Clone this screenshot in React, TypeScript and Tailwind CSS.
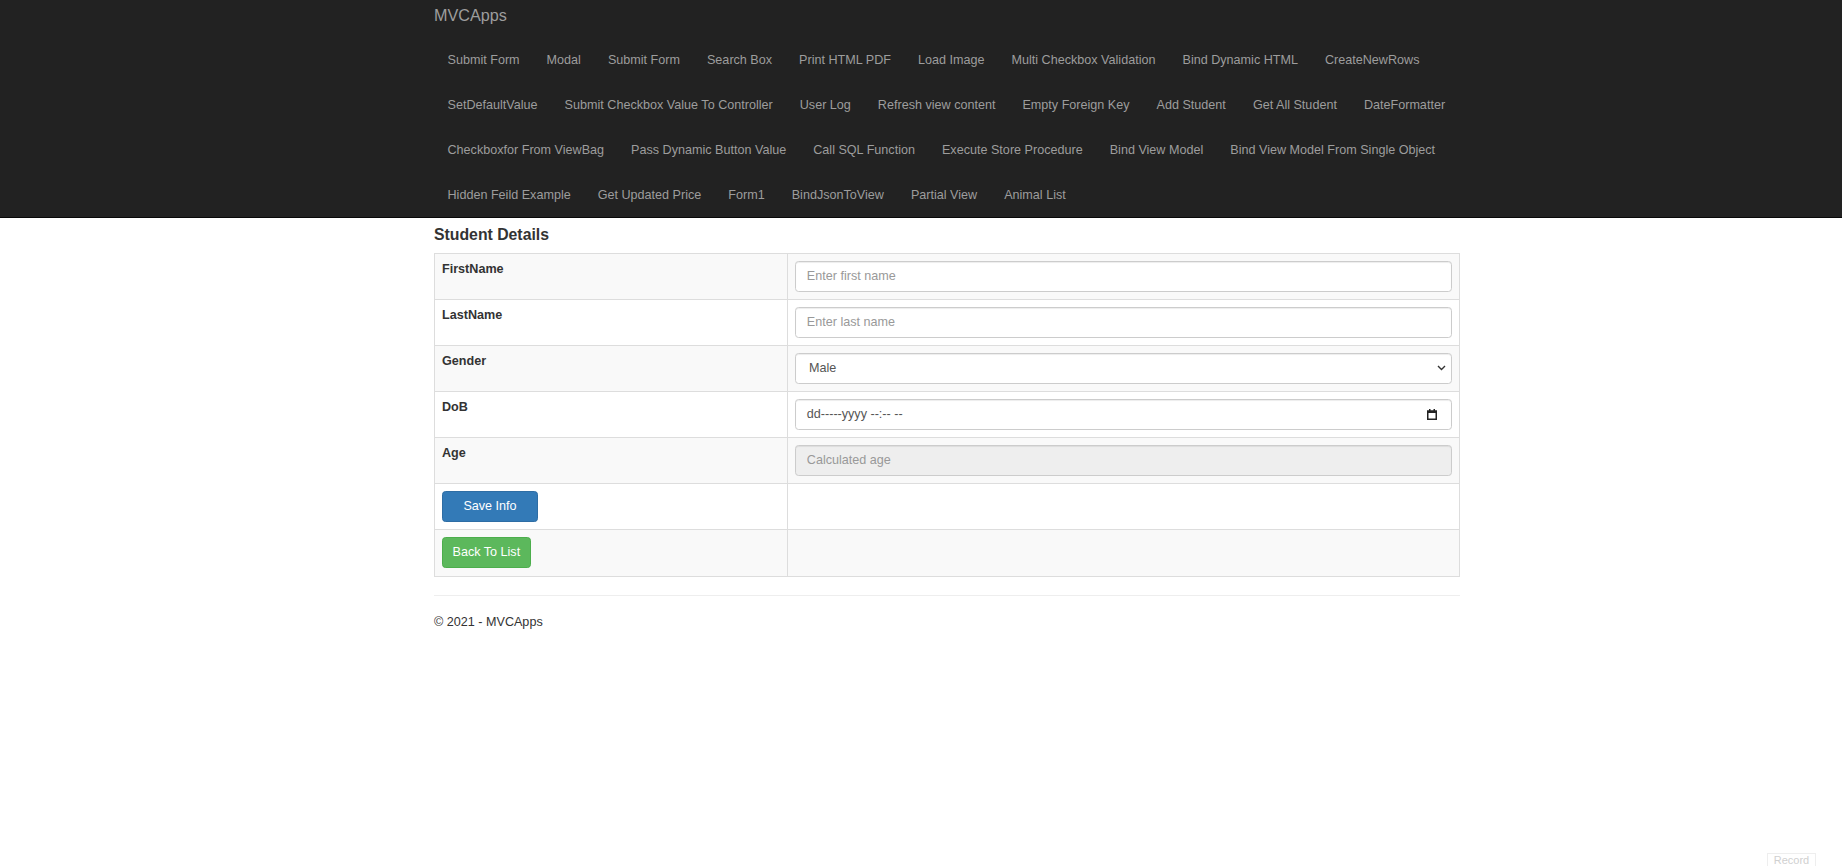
import React from "react";

const navRows = [
  [
    "Submit Form",
    "Modal",
    "Submit Form",
    "Search Box",
    "Print HTML PDF",
    "Load Image",
    "Multi Checkbox Validation",
    "Bind Dynamic HTML",
    "CreateNewRows",
  ],
  [
    "SetDefaultValue",
    "Submit Checkbox Value To Controller",
    "User Log",
    "Refresh view content",
    "Empty Foreign Key",
    "Add Student",
    "Get All Student",
    "DateFormatter",
  ],
  [
    "Checkboxfor From ViewBag",
    "Pass Dynamic Button Value",
    "Call SQL Function",
    "Execute Store Procedure",
    "Bind View Model",
    "Bind View Model From Single Object",
  ],
  [
    "Hidden Feild Example",
    "Get Updated Price",
    "Form1",
    "BindJsonToView",
    "Partial View",
    "Animal List",
  ],
];

const inputBase =
  "block w-full h-[31px] rounded-[3.6px] border border-[#ccc] px-[10.8px] text-[12.6px] text-[#555] shadow-[inset_0_1px_1px_rgba(0,0,0,0.075)] outline-none placeholder:text-[#999]";

function Row({
  label,
  striped,
  children,
  last,
}: {
  label?: React.ReactNode;
  striped?: boolean;
  children?: React.ReactNode;
  last?: boolean;
}) {
  return (
    <div
      className={`grid grid-cols-[353px_1fr] h-[46px] ${
        last ? "" : "border-b border-[#ddd]"
      } ${striped ? "bg-[#f9f9f9]" : "bg-white"}`}
    >
      <div className="border-r border-[#ddd] px-[7px]">{label}</div>
      <div className="p-[7px]">{children}</div>
    </div>
  );
}

function Label({ text }: { text: string }) {
  return (
    <div className="pt-[6.5px] text-[12.6px] leading-[18px] font-bold text-[#333]">
      {text}
    </div>
  );
}

export default function App() {
  return (
    <div className="min-h-screen bg-white font-['Liberation_Sans',Arial,sans-serif] text-[#333]">
      {/* Navbar */}
      <div className="bg-[#222] border-b border-[#080808]">
        <div className="ml-[434px] w-[1026px]">
          <div className="h-[37px] pt-[6px] text-[16.2px] leading-[18px] text-[#9d9d9d]">
            MVCApps
          </div>
          {navRows.map((row, i) => (
            <ul key={i} className="flex h-[45px] items-center">
              {row.map((item, j) => (
                <li
                  key={j}
                  className="px-[13.5px] text-[12.6px] leading-[18px] text-[#9d9d9d] whitespace-nowrap"
                >
                  {item}
                </li>
              ))}
            </ul>
          ))}
        </div>
      </div>

      {/* Body */}
      <div className="ml-[434px] w-[1026px]">
        <h4 className="mt-[7.5px] mb-[9px] text-[15.8px] leading-[18px] font-bold text-[#333]">
          Student Details
        </h4>

        <div className="border border-[#ddd]">
          <Row label={<Label text="FirstName" />} striped>
            <input className={`${inputBase} bg-white`} placeholder="Enter first name" />
          </Row>
          <Row label={<Label text="LastName" />}>
            <input className={`${inputBase} bg-white`} placeholder="Enter last name" />
          </Row>
          <Row label={<Label text="Gender" />} striped>
            <div className="relative">
              <select
                className={`${inputBase} bg-white appearance-none pl-[13px] text-[#333]`}
                defaultValue="Male"
              >
                <option>Male</option>
                <option>Female</option>
              </select>
              <svg
                className="absolute right-[6px] top-[12px] pointer-events-none"
                width="9"
                height="6"
                viewBox="0 0 9 6"
              >
                <path
                  d="M1 1l3.5 3.5L8 1"
                  fill="none"
                  stroke="#333"
                  strokeWidth="1.4"
                />
              </svg>
            </div>
          </Row>
          <Row label={<Label text="DoB" />}>
            <div
              className={`${inputBase} bg-white flex items-center justify-between pr-[14px] text-[#222]`}
            >
              <span>dd-----yyyy --:-- --</span>
              <svg width="10" height="11" viewBox="0 0 10 11">
                <rect x="0.75" y="2.25" width="8.5" height="8" fill="none" stroke="#222" strokeWidth="1.5" />
                <rect x="0" y="1.5" width="10" height="2.5" fill="#222" />
                <rect x="2" y="0" width="1.5" height="2" fill="#222" />
                <rect x="6.5" y="0" width="1.5" height="2" fill="#222" />
              </svg>
            </div>
          </Row>
          <Row label={<Label text="Age" />} striped>
            <input
              className={`${inputBase} bg-[#eee]`}
              placeholder="Calculated age"
              disabled
            />
          </Row>
          <Row
            label={
              <div className="pt-[7px]">
                <button className="h-[31px] w-[96px] rounded-[3.6px] border border-[#2e6da4] bg-[#337ab7] text-[12.6px] text-white">
                  Save Info
                </button>
              </div>
            }
          />
          <Row
            striped
            last
            label={
              <div className="pt-[7px]">
                <button className="h-[31px] rounded-[3.6px] border border-[#4cae4c] bg-[#5cb85c] px-[9.5px] text-[12.6px] text-white">
                  Back To List
                </button>
              </div>
            }
          />
        </div>

        <hr className="mt-[18px] border-t border-[#eee]" />
        <footer className="pt-[17px] text-[12.6px] leading-[18px] text-[#333]">
          © 2021 - MVCApps
        </footer>
      </div>

      <div className="fixed right-[26px] top-[853px] h-[13px] w-[49px] border-x border-t border-[#eee] bg-white text-center text-[11px] leading-[13px] text-[#d0d0d0]">
        Record
      </div>
    </div>
  );
}
